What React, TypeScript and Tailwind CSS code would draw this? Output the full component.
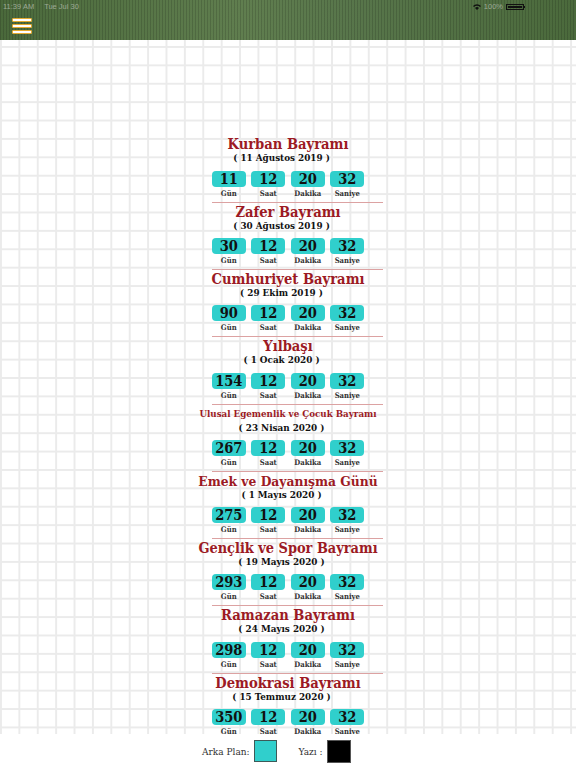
import React from 'react';

type Holiday = {
  title: string;
  date: string;
  days: string;
  size: string;
};

const holidays: Holiday[] = [
  { title: 'Kurban Bayramı', date: '( 11 Ağustos 2019 )', days: '11', size: 'text-[14.6px]' },
  { title: 'Zafer Bayramı', date: '( 30 Ağustos 2019 )', days: '30', size: 'text-[14.6px]' },
  { title: 'Cumhuriyet Bayramı', date: '( 29 Ekim 2019 )', days: '90', size: 'text-[14.6px]' },
  { title: 'Yılbaşı', date: '( 1 Ocak 2020 )', days: '154', size: 'text-[14.6px]' },
  { title: 'Ulusal Egemenlik ve Çocuk Bayramı', date: '( 23 Nisan 2020 )', days: '267', size: 'text-[9.7px]' },
  { title: 'Emek ve Dayanışma Günü', date: '( 1 Mayıs 2020 )', days: '275', size: 'text-[13.7px]' },
  { title: 'Gençlik ve Spor Bayramı', date: '( 19 Mayıs 2020 )', days: '293', size: 'text-[14.4px]' },
  { title: 'Ramazan Bayramı', date: '( 24 Mayıs 2020 )', days: '298', size: 'text-[14.6px]' },
  { title: 'Demokrasi Bayramı', date: '( 15 Temmuz 2020 )', days: '350', size: 'text-[14.6px]' },
];

const serif = { fontFamily: '"DejaVu Serif Condensed", "DejaVu Serif", serif' };

const Counter = ({ value, label }: { value: string; label: string }) => (
  <div className="flex flex-col items-center w-[34px]">
    <div className="w-[34px] h-[16px] rounded-[4px] bg-[#30cfcc] flex items-center justify-center text-[14.5px] leading-[16px] font-bold text-[#111]">
      {value}
    </div>
    <div className="mt-[2px] h-[9px] text-[7.6px] leading-[9px] font-bold text-[#333]">{label}</div>
  </div>
);

const HolidayRow = ({ h }: { h: Holiday }) => (
  <div className="h-[67.3px] w-[180px] mx-auto flex flex-col items-center">
    <div className={`h-[16px] leading-[16px] font-bold text-[#9c1a24] whitespace-nowrap ${h.size}`}>{h.title}</div>
    <div className="h-[11px] pr-[13px] leading-[11px] text-[9.8px] font-bold text-[#111] whitespace-nowrap">{h.date}</div>
    <div className="mt-[7.3px] flex gap-[5.5px]">
      <Counter value={h.days} label="Gün" />
      <Counter value="12" label="Saat" />
      <Counter value="20" label="Dakika" />
      <Counter value="32" label="Saniye" />
    </div>
    <div className="mt-[4px] ml-[18px] h-px w-[171px] bg-[#dca2a2]" />
  </div>
);

export default function App() {
  return (
    <div className="w-[576px] h-[768px] flex flex-col bg-white overflow-hidden font-stretch-condensed" style={serif}>
      {/* top bar */}
      <div className="h-[40px] shrink-0 flex flex-col bg-[repeating-linear-gradient(90deg,rgba(0,0,0,0.14)_0px,rgba(0,0,0,0.14)_1.5px,transparent_1.5px,transparent_3px),linear-gradient(90deg,#4a693b,#607e4f_42%,#58764b_60%,#4b6a3c)]">
        <div
          className="h-[13px] px-[3px] flex items-center justify-between text-[7.5px] text-[#9ea996] font-stretch-normal"
          style={{ fontFamily: '"Liberation Sans", Arial, sans-serif' }}
        >
          <div className="flex gap-[10px]">
            <span>11:39 AM</span>
            <span>Tue Jul 30</span>
          </div>
          <div className="flex items-center gap-[3px] pr-[48px]">
            <svg width="8" height="6" viewBox="0 0 8 6">
              <path d="M0 2 A5.5 5.5 0 0 1 8 2 L7 3 A4 4 0 0 0 1 3 Z" fill="#111" />
              <path d="M2 4 A3 3 0 0 1 6 4 L4 6 Z" fill="#111" />
            </svg>
            <span>100%</span>
            <div className="flex items-center">
              <div className="w-[18px] h-[6px] border border-[#111] p-px">
                <div className="w-full h-full bg-[#111]" />
              </div>
              <div className="w-[1px] h-[2px] bg-[#111]" />
            </div>
          </div>
        </div>
        <div className="pl-[12px] pt-[5px] flex flex-col gap-[2px]">
          <div className="w-[20px] h-[4px] bg-white border border-[#e3aa30] rounded-[1px]" />
          <div className="w-[20px] h-[4px] bg-white border border-[#e3aa30] rounded-[1px]" />
          <div className="w-[20px] h-[4px] bg-white border border-[#e3aa30] rounded-[1px]" />
        </div>
      </div>

      {/* list on grid paper */}
      <div className="flex-1 overflow-hidden pt-[96.4px] bg-white bg-[image:linear-gradient(90deg,#ebebeb_0px,#ebebeb_2px,transparent_2px),linear-gradient(180deg,#ebebeb_0px,#ebebeb_2px,transparent_2px)] bg-[size:18.4px_18.4px] bg-[position:0px_6px]">
        {holidays.map((h) => (
          <HolidayRow key={h.title} h={h} />
        ))}
      </div>

      {/* colour pickers */}
      <div className="h-[34px] shrink-0 bg-white flex items-center pl-[202px] text-[10px] text-[#333]">
        <span>Arka Plan:</span>
        <div className="ml-[4px] w-[23px] h-[22px] bg-[#30cfcc] border border-[#3d5a58]" />
        <span className="ml-[22px]">Yazı :</span>
        <div className="ml-[4px] w-[24px] h-[23px] bg-black border border-[#555]" />
      </div>
    </div>
  );
}
